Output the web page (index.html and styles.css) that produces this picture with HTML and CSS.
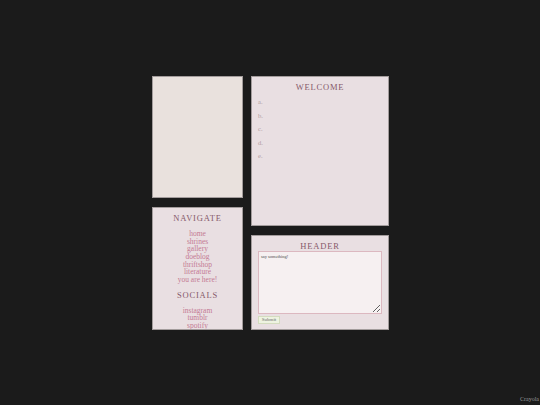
FILE: index.html
```html
<!DOCTYPE html>
<html>
<head>
<meta charset="utf-8">
<link rel="stylesheet" href="styles.css">
</head>
<body>
<div class="page">
  <div class="layout">
    <div class="col col-left">
      <div class="panel panel-blank"></div>
      <div class="panel panel-nav">
        <h2 class="title">NAVIGATE</h2>
        <ul class="links">
          <li><a href="#">home</a></li>
          <li><a href="#">shrines</a></li>
          <li><a href="#">gallery</a></li>
          <li><a href="#">doeblog</a></li>
          <li><a href="#">thriftshop</a></li>
          <li><a href="#">literature</a></li>
          <li><a href="#">you are here!</a></li>
        </ul>
        <h2 class="title title-socials">SOCIALS</h2>
        <ul class="links">
          <li><a href="#">instagram</a></li>
          <li><a href="#">tumblr</a></li>
          <li><a href="#">spotify</a></li>
        </ul>
      </div>
    </div>
    <div class="col col-right">
      <div class="panel panel-welcome">
        <h2 class="title">WELCOME</h2>
        <ul class="items">
          <li>a.</li>
          <li>b.</li>
          <li>c.</li>
          <li>d.</li>
          <li>e.</li>
        </ul>
      </div>
      <div class="panel panel-header">
        <h2 class="title">HEADER</h2>
        <form class="form">
          <textarea class="message">say something!</textarea>
          <button type="button" class="submit">Submit</button>
        </form>
      </div>
    </div>
  </div>
  <div class="credit">Crayola</div>
</div>
</body>
</html>
```

FILE: styles.css
```css
* { box-sizing: border-box; }

html, body {
  margin: 0;
  padding: 0;
  background: #1b1b1b;
  height: 100%;
  overflow: hidden;
}

body {
  font-family: "Liberation Serif", "Times New Roman", serif;
}

.page {
  height: 405px;
  display: flex;
  flex-direction: column;
  padding-top: 76px;
}

.layout {
  display: grid;
  grid-template-columns: 91px 138px;
  column-gap: 8px;
  margin-left: 152px;
}

.col {
  display: flex;
  flex-direction: column;
  gap: 9px;
}

.panel {
  border: 1px solid #a39c9c;
  background: #e9dfe2;
  overflow: hidden;
}

.panel-blank {
  height: 122px;
  background: #e9e1dd;
}

.panel-nav {
  height: 123px;
  padding-top: 5px;
  text-align: center;
}

.panel-welcome {
  height: 150px;
  padding: 5px 6px 0;
}

.panel-header {
  height: 95px;
  padding: 5px 6px 0;
}

.title {
  margin: 0;
  font-weight: normal;
  font-size: 8.5px;
  line-height: 10px;
  letter-spacing: 0.8px;
  color: #86596a;
  text-align: center;
}

.links {
  list-style: none;
  margin: 7px 0 0;
  padding: 0;
}

.links li {
  font-size: 7.5px;
  line-height: 7.67px;
}

.links a {
  color: #c47a93;
  text-decoration: none;
}

.title-socials {
  margin-top: 6px;
}

.items {
  list-style: none;
  margin: 3px 0 0;
  padding: 0;
}

.items li {
  font-size: 6.5px;
  line-height: 13.5px;
  color: #b09da3;
}

.form {
  display: flex;
  flex-direction: column;
  align-items: flex-start;
}

.message {
  width: 124px;
  height: 63px;
  margin: 0;
  padding: 2px;
  border: 1px solid #dcb8c0;
  background: #f6f0f1;
  font-family: "Liberation Serif", serif;
  font-size: 4.5px;
  line-height: 5px;
  color: #4a4a4a;
  resize: both;
}

.submit {
  margin-top: 2px;
  width: 22px;
  height: 8px;
  padding: 0;
  border: 1px solid #d4dcbf;
  background: #eef3e1;
  font-family: "Liberation Serif", serif;
  font-size: 5px;
  line-height: 6px;
  color: #6d6d6d;
}

.credit {
  margin-top: auto;
  margin-bottom: 3px;
  padding-right: 1px;
  align-self: flex-end;
  white-space: nowrap;
  font-size: 6px;
  color: #999;
}
```
